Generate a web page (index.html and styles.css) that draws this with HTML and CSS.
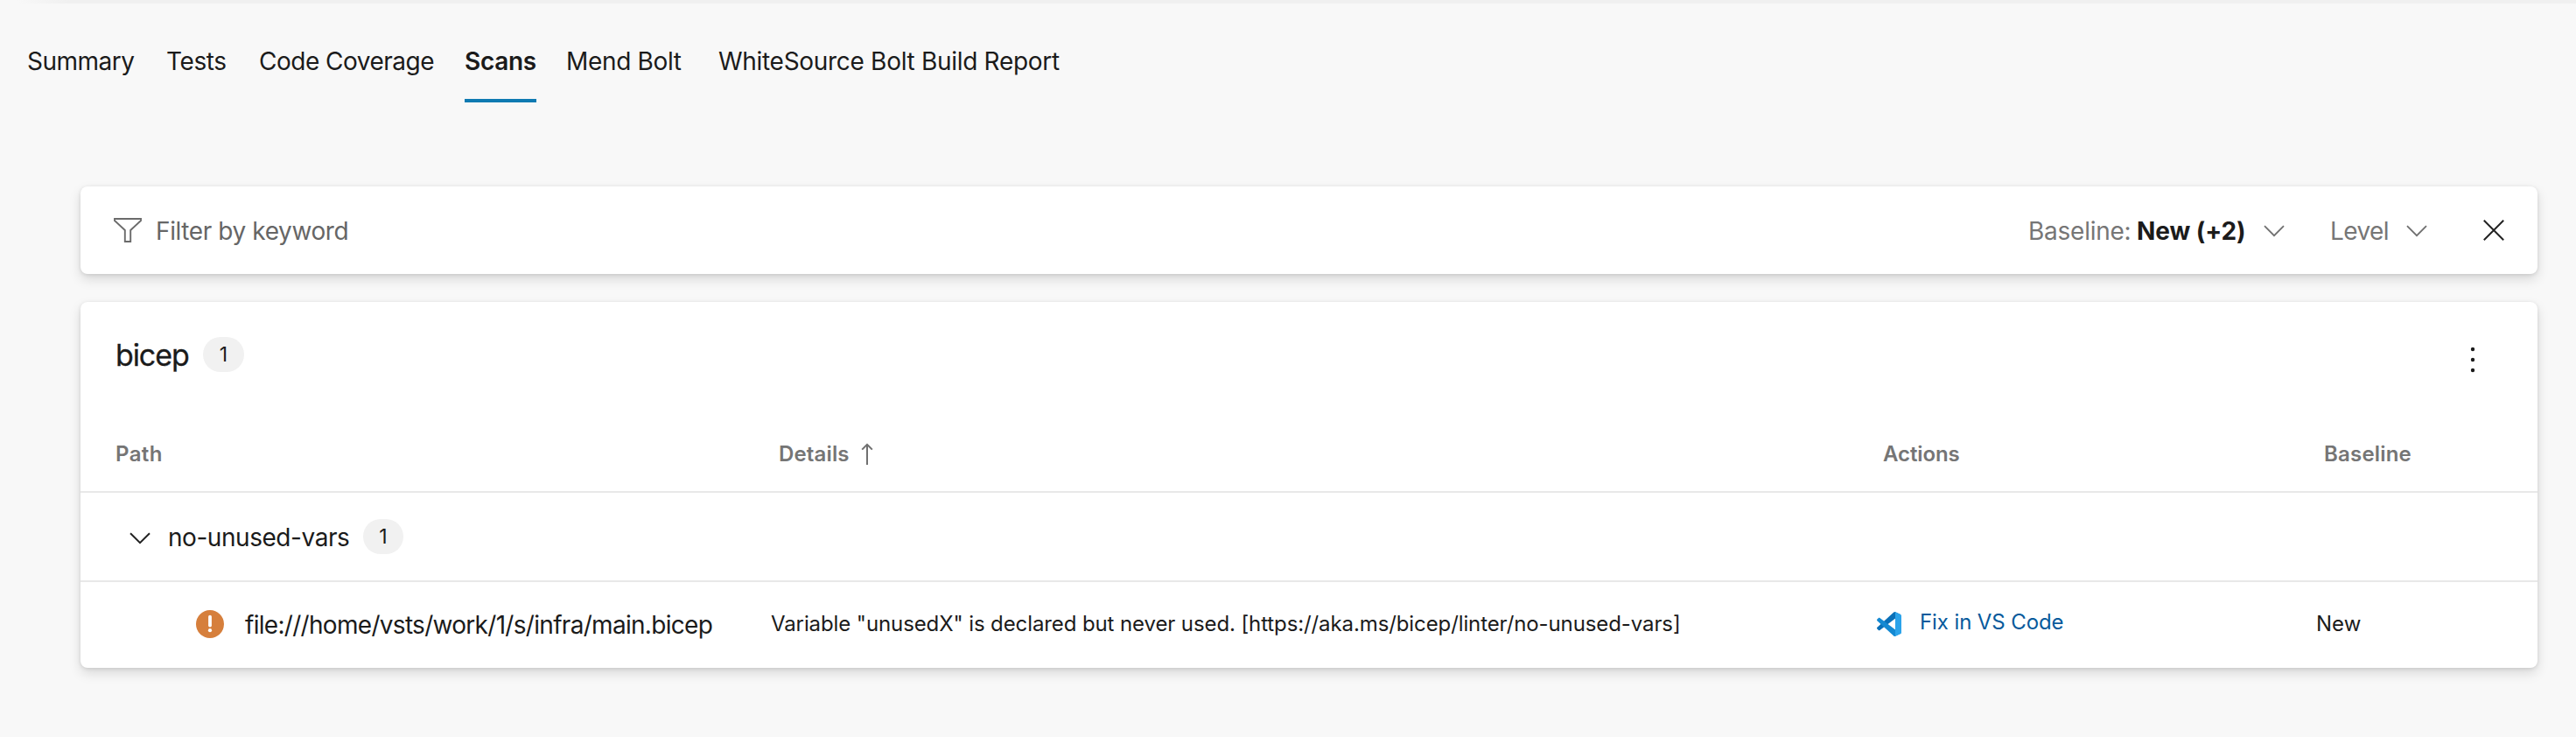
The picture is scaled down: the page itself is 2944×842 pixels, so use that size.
FILE: index.html
```html
<!DOCTYPE html>
<html lang="en">
<head>
<meta charset="utf-8">
<title>Scans</title>
<link rel="stylesheet" href="styles.css">
</head>
<body>
<div class="top-edge"></div>
<nav class="tabs">
  <a class="tab t-summary">Summary</a>
  <a class="tab t-tests">Tests</a>
  <a class="tab t-coverage">Code Coverage</a>
  <a class="tab active">Scans</a>
  <a class="tab t-mend">Mend Bolt</a>
  <a class="tab t-report">WhiteSource Bolt Build Report</a>
</nav>
<main class="content">
  <section class="card filter-bar">
    <svg class="funnel" width="34" height="30" viewBox="0 0 34 30"><path d="M2 2H32V4L20.2 15V28H13.8V15L2 4Z" fill="none" stroke="#6b6b6b" stroke-width="1.9"/></svg>
    <span class="placeholder">Filter by keyword</span>
    <div class="dropdown baseline-filter">
      <span class="label">Baseline:</span>
      <strong>New (+2)</strong>
      <svg class="chevron" width="24" height="14" viewBox="0 0 24 14"><path d="M1 1.2 12 12.2 23 1.2" fill="none" stroke="#707070" stroke-width="1.8"/></svg>
    </div>
    <div class="dropdown level-filter">
      <span class="level">Level</span>
      <svg class="chevron" width="24" height="14" viewBox="0 0 24 14"><path d="M1 1.2 12 12.2 23 1.2" fill="none" stroke="#707070" stroke-width="1.8"/></svg>
    </div>
    <svg class="close" width="24" height="24" viewBox="0 0 24 24"><path d="M.8.8 23.2 23.2M23.2.8.8 23.2" fill="none" stroke="#222" stroke-width="2"/></svg>
  </section>
  <section class="card results">
    <header class="results-header">
      <h2>bicep</h2>
      <span class="pill">1</span>
      <svg class="more" width="6" height="30" viewBox="0 0 6 30"><g fill="#1b1b1b"><circle cx="3" cy="3" r="2.2"/><circle cx="3" cy="15" r="2.2"/><circle cx="3" cy="27" r="2.2"/></g></svg>
    </header>
    <div class="row head">
      <span class="h-path">Path</span>
      <span class="h-details">Details<svg class="sort" width="14" height="26" viewBox="0 0 14 26"><path d="M7 25V2M1.2 7.6 7 1.8l5.8 5.8" fill="none" stroke="#707070" stroke-width="2"/></svg></span>
      <span class="h-actions">Actions</span>
      <span class="h-baseline">Baseline</span>
    </div>
    <div class="group">
      <svg class="group-chevron" width="24" height="14" viewBox="0 0 24 14"><path d="M1 1.2 12 12.2 23 1.2" fill="none" stroke="#222" stroke-width="2"/></svg>
      <span class="group-name">no-unused-vars</span>
      <span class="pill small">1</span>
    </div>
    <div class="row item">
      <span class="path">
        <svg class="warning" width="32" height="32" viewBox="0 0 32 32"><circle cx="16" cy="16" r="16" fill="#d67f3c"/><path d="M16 7.6V17.6" stroke="#fff" stroke-width="3.8" stroke-linecap="round"/><circle cx="16" cy="23.2" r="2.1" fill="#fff"/></svg>
        <span class="file">file:///home/vsts/work/1/s/infra/main.bicep</span>
      </span>
      <span class="details">Variable "unusedX" is declared but never used. [https://aka.ms/bicep/linter/no-unused-vars]</span>
      <a class="fix">
        <svg class="vscode" width="28" height="28" viewBox="0 0 100 100">
          <path fill="#0a70b8" d="M96.46 10.8 75.86.88C73.47-.27 70.62.21 68.75 2.08L1.3 63.58c-1.81 1.65-1.81 4.51 0 6.16l5.51 5.01c1.49 1.35 3.72 1.45 5.32.24L93.36 13.37C96.09 11.3 100 13.25 100 16.67v-.24c0-2.4-1.38-4.59-3.54-5.63Z"/>
          <path fill="#1489d2" d="M96.46 89.2 75.86 99.12c-2.39 1.15-5.24.67-7.11-1.2L1.3 36.42c-1.81-1.65-1.81-4.51 0-6.17l5.51-5c1.49-1.35 3.72-1.45 5.32-.24L93.36 86.63c2.73 2.07 6.64.12 6.64-3.3v.24c0 2.4-1.38 4.59-3.54 5.63Z"/>
          <path fill="#2ba3ea" d="M75.86 99.13c-2.39 1.14-5.24.66-7.11-1.21C71.06 100.22 75 98.59 75 95.33V4.67c0-3.26-3.94-4.89-6.25-2.59C70.62.21 73.47-.27 75.86.87l20.6 9.91c2.16 1.04 3.54 3.23 3.54 5.63v67.18c0 2.4-1.38 4.59-3.54 5.63Z"/>
        </svg>
        <span>Fix in VS Code</span>
      </a>
      <span class="state">New</span>
    </div>
  </section>
</main>
</body>
</html>
```
FILE: styles.css
```css
* { box-sizing: border-box; }

body {
  margin: 0;
  min-height: 842px;
  background: #f8f8f8;
  color: #1b1b1b;
  font: 28px/34px Inter, "Liberation Sans", sans-serif;
  white-space: nowrap;
}

svg { display: block; flex: none; }

.top-edge {
  height: 4px;
  background: linear-gradient(90deg, #f8f8f8 20px, #f0f0f0 80px);
}

.tabs {
  display: grid;
  grid-template-columns: 159px 106px 235px 116px 174px auto;
  height: 113px;
  padding: 49px 0 0 31px;
}

.tab { justify-self: start; height: 64px; letter-spacing: -.4px; }
.tab.t-summary { letter-spacing: -.5px; }
.tab.t-coverage { letter-spacing: -.5px; }
.tab.t-mend { letter-spacing: -.34px; }
.tab.t-report { letter-spacing: -.3px; }
.tab.active {
  width: 82px;
  border-bottom: 4px solid #0f7ab2;
  font-weight: 600;
  letter-spacing: -.3px;
}

.content { padding: 96px 44px 0 92px; }

.card {
  border-radius: 8px;
  background: #fff;
  box-shadow: 0 6px 14px rgba(0, 0, 0, .13), 0 1px 4px rgba(0, 0, 0, .11);
}

.filter-bar {
  display: flex;
  align-items: center;
  height: 100px;
  margin-bottom: 32px;
  padding: 0 38px 0 37px;
}

.placeholder { margin: 1px 0 0 15px; color: #666; letter-spacing: -.4px; }
.dropdown { display: flex; align-items: center; color: #767676; }
.dropdown span, .dropdown strong { margin-top: 1px; }
.baseline-filter { margin-left: auto; }
.label { width: 124px; letter-spacing: -.25px; }
.dropdown strong { width: 145px; color: #1b1b1b; font-weight: 700; letter-spacing: -.1px; }
.level-filter { margin-left: 52px; }
.level { width: 87px; letter-spacing: -.6px; }
.chevron { margin-top: 2px; }
.close { margin-left: 64px; }

.results { height: 418px; }

.results-header { display: flex; align-items: flex-start; height: 140px; padding: 40px 71px 0 40px; }
.results-header h2 {
  width: 100px;
  margin: 0;
  font-size: 34px;
  font-weight: 400;
  line-height: 42px;
  letter-spacing: -1.1px;
  -webkit-text-stroke: .3px #1b1b1b;
}

.pill {
  width: 47px;
  height: 40px;
  border-radius: 20px;
  background: #f1f1f1;
  font-size: 23px;
  line-height: 40px;
  text-align: center;
}
.pill.small { width: 46px; }
.more { margin: 11px 0 0 auto; }

.row { display: grid; font-size: 24px; line-height: 30px; }
.head {
  grid-template-columns: 758px 1262px 504px auto;
  height: 78px;
  padding: 19px 0 0 40px;
  border-bottom: 2px solid #e8e8e8;
  color: #757575;
  font-weight: 600;
}
.h-path { letter-spacing: .4px; }
.h-details { display: flex; letter-spacing: .15px; }
.sort { margin: 2px 0 0 13px; }
.h-actions { letter-spacing: -.1px; }
.h-baseline { letter-spacing: .2px; }

.group {
  display: flex;
  height: 102px;
  padding: 30px 0 0 56px;
  border-bottom: 2px solid #e8e8e8;
}
.group-chevron { margin: 15px 20px 0 0; }
.group-name { width: 223px; padding-top: 4px; letter-spacing: -.45px; }

.item { grid-template-columns: 789px 1264px 502px auto; padding-top: 32px; }
.path { display: flex; padding-left: 132px; font-size: 28px; line-height: 34px; }
.file { margin-left: 24px; letter-spacing: -.7px; }
.details { padding-top: 1px; letter-spacing: -.105px; }
.fix { display: flex; color: #075a9c; letter-spacing: -.1px; }
.fix span { margin: -1px 0 0 21px; }
.vscode { margin-top: 2px; }
.state { padding-top: 1px; }
```
